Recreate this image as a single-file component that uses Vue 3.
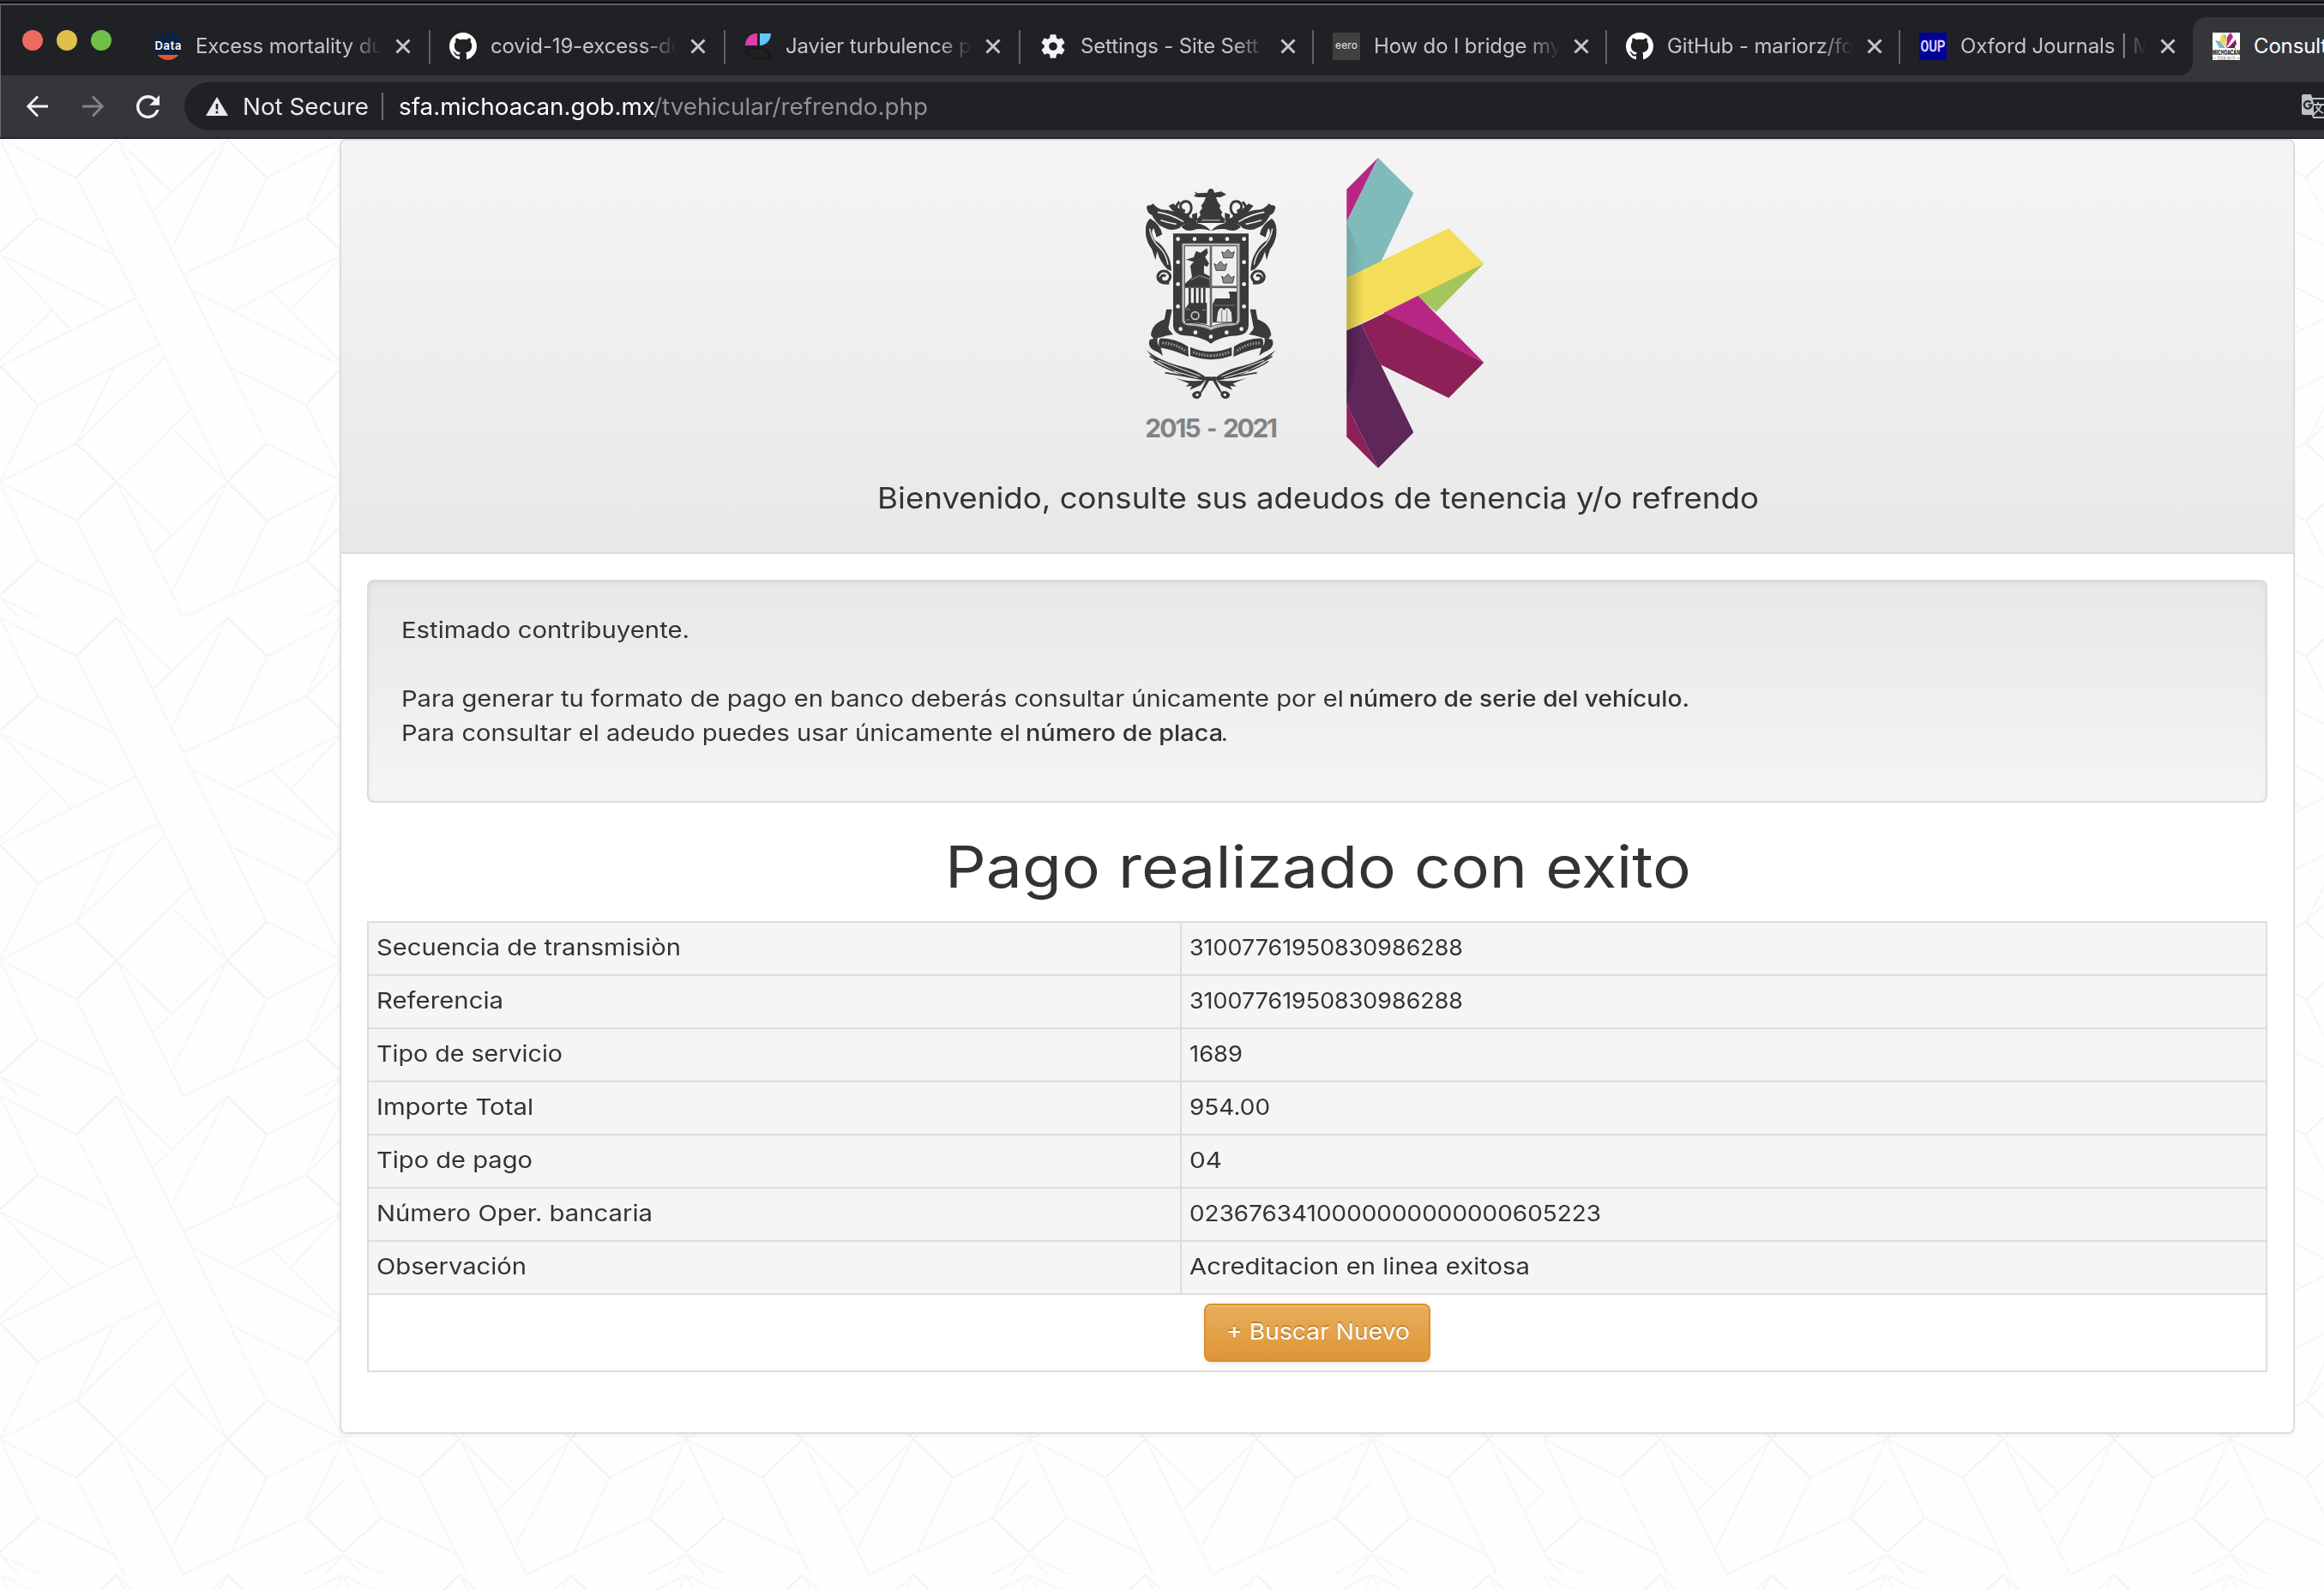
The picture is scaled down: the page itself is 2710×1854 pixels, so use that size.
<script setup>
const tabs = [
  { icon: 'data', title: 'Excess mortality du', width: 343 },
  { icon: 'github', title: 'covid-19-excess-de', width: 344 },
  { icon: 'leaf', title: 'Javier turbulence p', width: 344 },
  { icon: 'gear', title: 'Settings - Site Sett', width: 342 },
  { icon: 'eero', title: 'How do I bridge my', width: 342 },
  { icon: 'github', title: 'GitHub - mariorz/fo', width: 342 },
  { icon: 'oup', title: 'Oxford Journals | M', width: 342 },
]

const rows = [
  { label: 'Secuencia de transmisiòn', lw: 353, value: '31007761950830986288', vw: 317 },
  { label: 'Referencia', lw: 146, value: '31007761950830986288', vw: 317 },
  { label: 'Tipo de servicio', lw: 215, value: '1689', vw: 60 },
  { label: 'Importe Total', lw: 181, value: '954.00', vw: 92 },
  { label: 'Tipo de pago', lw: 180, value: '04', vw: 36 },
  { label: 'Número Oper. bancaria', lw: 320, value: '0236763410000000000000605223', vw: 478 },
  { label: 'Observación', lw: 173, value: 'Acreditacion en linea exitosa', vw: 395 },
]

const tiles = []
for (const x of [0, 1800]) for (const y of [0, 558, 1116, 1674]) tiles.push({ x, y })

// Widens a single-line text so that it fills the given width in pixels.
const vFit = {
  mounted(el, { value }) {
    el.style.display = 'inline-block'
    const natural = el.getBoundingClientRect().width
    el.style.width = value + 'px'
    el.style.textAlign = 'left'
    el.style.transformOrigin = '0 50%'
    el.style.transform = `scaleX(${(value + 2) / natural})`
  },
}
</script>

<template>
  <div class="screen">
    <header class="chrome">
      <div class="tabstrip">
        <div class="lights"><i class="red"></i><i class="yellow"></i><i class="green"></i></div>
        <div v-for="(t, i) in tabs" :key="i" class="tab" :class="{ first: i === 0, last: i === tabs.length - 1 }" :style="{ width: t.width + 'px' }">
          <svg v-if="t.icon === 'data'" class="fav" viewBox="0 0 32 32">
            <clipPath id="disc"><circle cx="16" cy="16" r="16" /></clipPath>
            <g clip-path="url(#disc)"><rect width="32" height="32" fill="#0b2140" /><rect y="26" width="32" height="6" fill="#f0512d" /></g>
            <text x="16" y="20" text-anchor="middle" font-size="13" font-weight="600" fill="#fff" textLength="31">Data</text>
          </svg>
          <svg v-else-if="t.icon === 'github'" class="fav" viewBox="0 0 16 16">
            <path fill="#fff" d="M8 0C3.58 0 0 3.58 0 8c0 3.54 2.29 6.53 5.47 7.59.4.07.55-.17.55-.38 0-.19-.01-.82-.01-1.49-2.01.37-2.53-.49-2.69-.94-.09-.23-.48-.94-.82-1.13-.28-.15-.68-.52-.01-.53.63-.01 1.08.58 1.23.82.72 1.21 1.87.87 2.33.66.07-.52.28-.87.51-1.07-1.78-.2-3.64-.89-3.64-3.95 0-.87.31-1.59.82-2.15-.08-.2-.36-1.02.08-2.12 0 0 .67-.21 2.2.82.64-.18 1.32-.27 2-.27s1.36.09 2 .27c1.53-1.04 2.2-.82 2.2-.82.44 1.1.16 1.92.08 2.12.51.56.82 1.27.82 2.15 0 3.07-1.87 3.75-3.65 3.95.29.25.54.73.54 1.48 0 1.07-.01 1.93-.01 2.2 0 .21.15.46.55.38A8.01 8.01 0 0 0 16 8c0-4.42-3.58-8-8-8z" />
          </svg>
          <svg v-else-if="t.icon === 'leaf'" class="fav" viewBox="0 0 32 32">
            <path d="M1 15A13 14 0 0 1 15 1V15Z" fill="#e13bab" />
            <path d="M18 1H31A13 14 0 0 1 18 15Z" fill="#5ec8f8" />
            <path d="M2 18H17Q29 19 30 30H16Q3 29 2 18Z" fill="none" stroke="#191919" stroke-width="2.5" />
          </svg>
          <svg v-else-if="t.icon === 'gear'" class="fav" viewBox="1.2 0 21.6 24">
            <path fill="#f1f3f4" transform="translate(12 12) scale(1.03) translate(-12 -12)" d="M19.43 12.98c.04-.32.07-.64.07-.98s-.03-.66-.07-.98l2.11-1.65c.19-.15.24-.42.12-.64l-2-3.46c-.12-.22-.39-.3-.61-.22l-2.49 1c-.52-.4-1.08-.73-1.69-.98l-.38-2.65A.488.488 0 0 0 14 2h-4c-.25 0-.46.18-.49.42l-.38 2.65c-.61.25-1.17.59-1.69.98l-2.49-1c-.23-.09-.49 0-.61.22l-2 3.46c-.13.22-.07.49.12.64l2.11 1.65c-.04.32-.07.65-.07.98s.03.66.07.98l-2.11 1.65c-.19.15-.24.42-.12.64l2 3.46c.12.22.39.3.61.22l2.49-1c.52.4 1.08.73 1.69.98l.38 2.65c.03.24.24.42.49.42h4c.25 0 .46-.18.49-.42l.38-2.65c.61-.25 1.17-.59 1.69-.98l2.49 1c.23.09.49 0 .61-.22l2-3.46c.12-.22.07-.49-.12-.64l-2.11-1.65zM12 15.500c-1.930 0-3.500-1.570-3.500-3.500s1.570-3.500 3.500-3.500 3.500 1.570 3.500 3.500-1.570 3.500-3.500 3.500z" />
          </svg>
          <svg v-else-if="t.icon === 'eero'" class="fav" viewBox="0 0 32 32">
            <rect width="32" height="32" fill="#404040" />
            <text x="3" y="19" font-size="12" fill="#e6e6e6" textLength="26">eero</text>
          </svg>
          <svg v-else class="fav" viewBox="0 0 32 32">
            <rect width="32" height="32" fill="#020299" />
            <text x="1.5" y="22" class="mono" font-size="20" fill="#dcdcff" stroke="#dcdcff" stroke-width=".6" textLength="29" lengthAdjust="spacingAndGlyphs">OUP</text>
          </svg>
          <span class="title">{{ t.title }}</span>
          <svg class="close" viewBox="0 0 18 18"><path d="M1.5 1.5L16.5 16.5M16.5 1.5L1.5 16.5" stroke="#c6c7ca" stroke-width="3" /></svg>
        </div>
        <div class="tab active">
          <svg class="fav" viewBox="0 0 32 32">
            <rect width="32" height="32" fill="#fff" />
            <path d="M16 18L9 9 10 2 14 4Z" fill="#f0d848" />
            <path d="M12 0l4 4v7z" fill="#a9c55b" />
            <path d="M16 18L17 5 21 0 24 5Z" fill="#b82683" />
            <path d="M18 18L27 8 28 14Z" fill="#8d2058" />
            <path d="M3 9L9 10 15 18H8Z" fill="#7fbaba" />
            <path d="M16 18L27 13 26 18Z" fill="#5f2759" />
            <text x="0" y="26" font-size="8" font-weight="800" fill="#222" textLength="32" lengthAdjust="spacingAndGlyphs">MICHOACÁN</text>
            <text x="6" y="31.500" font-size="6" fill="#777" textLength="20" lengthAdjust="spacingAndGlyphs">Está en ti</text>
            <path d="M0 30H4M28 30H32" stroke="#aaa" />
          </svg>
          <span class="title">Consulta</span>
        </div>
      </div>
      <div class="toolbar">
        <svg class="nav" viewBox="0 0 26 26"><path d="M25 13H3M13 1.5L1.8 13L13 24.5" fill="none" stroke="#f1f3f4" stroke-width="2.8" /></svg>
        <svg class="nav fwd" viewBox="0 0 26 26"><path d="M1 13H23M13 1.5L24.2 13L13 24.5" fill="none" stroke="#828386" stroke-width="2.8" /></svg>
        <svg class="reload" viewBox="4 4 16 16"><path fill="#f1f3f4" d="M17.65 6.35A7.958 7.958 0 0 0 12 4c-4.42 0-7.99 3.58-7.99 8s3.57 8 7.99 8c3.73 0 6.84-2.55 7.73-6h-2.08A5.99 5.99 0 0 1 12 18c-3.31 0-6-2.69-6-6s2.69-6 6-6c1.66 0 3.14.69 4.22 1.78L13 11h7V4l-2.35 2.35z" /></svg>
        <div class="omnibox">
          <svg class="warn" viewBox="0 0 26 22"><path fill="#e8eaed" d="M13 0L26 22H0Z" /><path d="M13 8V14.5M13 16.5V19.2" stroke="#202124" stroke-width="2.6" /></svg>
          <span class="secure"><span v-fit="145">Not Secure</span></span>
          <i class="bar"></i>
          <span class="url"><span v-fit="297" class="host">sfa.michoacan.gob.mx</span><span v-fit="318">/tvehicular/refrendo.php</span></span>
          <svg class="translate" viewBox="0 0 28 28">
            <path d="M12 5H30V27H14L12 22" fill="none" stroke="#bdc1c6" stroke-width="2" />
            <path d="M14 12H26M19 9V12M23 12Q21 18 15 22M17 14Q19 19 25 22" fill="none" stroke="#bdc1c6" stroke-width="1.8" />
            <path d="M2 0H11L14 10V20L16 24H2Q0 24 0 22V2Q0 0 2 0Z" fill="#bdc1c6" />
            <path d="M10.5 9.5A4.3 4.3 0 1 0 11.500 12.500H7.500" fill="none" stroke="#2b2c2f" stroke-width="2.4" />
          </svg>
        </div>
      </div>
    </header>

    <main class="page">
      <svg class="backdrop" width="2710" height="1692">
        <defs>
          <pattern id="motif" width="400" height="400" patternUnits="userSpaceOnUse">
            <g fill="none" stroke="#f6f6f6" stroke-width="2">
              <path d="M0 0L89 45L265 400M0 0L44 92L134 135M136 0L311 355L400 400M136 0L200 62M265 0L178 84M265 0L201 126M311 45L269 133M400 0L311 45M400 0L357 92L215 157M400 48L357 92M0 135L129 199M0 135L82 222M158 186L0 265M62 199L0 258M44 310L185 240M133 267L89 355M192 255L89 355M44 310L0 400L89 355M136 400L222 315M203 340L265 400M224 177L400 265M400 135L274 199M316 178L400 262M340 199L400 135M267 266L357 310L400 400" />
              <path stroke="#f1f1f1" d="M136 0L89 45M265 0L311 45M44 92L0 132M357 92L400 132M0 265L44 310M89 355L136 400M357 310L400 265M311 355L265 400" />
            </g>
          </pattern>
        </defs>
        <rect v-for="(t, i) in tiles" :key="i" width="1800" height="558" :transform="`translate(${t.x} ${t.y})`" fill="url(#motif)" />
      </svg>

      <section class="panel">
        <div class="heading">
          <svg class="logos" viewBox="108 60 1190 1110">
            <defs>
              <linearGradient id="fold" x1="0" x2="1"><stop offset="0" stop-color="#000" stop-opacity=".22" /><stop offset="1" stop-color="#000" stop-opacity="0" /></linearGradient>
              <g id="half" fill="#3a3a3a">
                <path d="M112 250Q108 236 126 238L134 232Q150 256 182 254Q226 262 284 290L290 304Q240 296 226 318Q196 330 176 318Q148 310 130 272Q116 270 112 250Z" />
                <path d="M150 262Q200 270 240 296M160 290Q190 300 215 304" fill="none" stroke="#efefef" stroke-width="5" />
                <path d="M188 240L205 232Q222 250 262 276L252 290Q210 270 188 240Z" />
                <path d="M246 258Q228 256 230 238Q238 220 258 226Q274 240 264 262Q254 280 226 270Q200 256 226 226" fill="none" stroke="#3a3a3a" stroke-width="9" />
                <path d="M270 270L288 264V292H272Z" />
                <path d="M124 284Q104 300 108 340Q112 370 130 392L142 430L148 400Q160 440 184 462L198 468Q196 430 184 410Q168 376 140 360Q122 330 136 318L146 350L166 340Q160 306 124 284Z" />
                <path d="M122 320Q126 360 160 390Q180 410 186 446" fill="none" stroke="#efefef" stroke-width="4" />
                <path d="M178 486Q164 478 160 494Q166 512 186 504Q204 484 182 470Q158 462 150 486Q150 514 190 510" fill="none" stroke="#3a3a3a" stroke-width="9" />
                <path d="M232 312Q250 296 282 300Q320 306 336 328Q310 318 286 322Q250 336 232 312Z" />
                <path d="M180 602H200L188 664L168 658Q176 630 180 602Z" />
                <path d="M178 636Q130 650 126 692L136 706Q164 700 182 694L204 690L190 674Z" />
                <path d="M122 708Q114 730 134 744Q150 750 168 764L160 736Q144 722 150 702Z" />
                <path d="M158 704Q206 702 256 732L258 768Q200 742 156 736Q150 716 158 704Z" />
                <path d="M166 720Q210 720 250 750" fill="none" stroke="#999" stroke-width="9" stroke-dasharray="5 5" />
                <path d="M264 734Q300 750 337 750V778Q298 776 264 764Z" />
                <path d="M274 752Q304 764 336 764" fill="none" stroke="#999" stroke-width="9" stroke-dasharray="5 5" />
                <path d="M110 744Q160 786 250 806Q290 816 322 842L314 852Q240 830 200 812Q140 786 110 744Z" />
                <path d="M122 766Q170 800 250 816M136 784Q190 820 300 846M176 824Q240 834 310 848" fill="none" stroke="#3a3a3a" stroke-width="5" />
                <path d="M150 780Q220 806 300 836M206 818Q250 830 290 842" fill="none" stroke="#efefef" stroke-width="3" />
                <path d="M200 838Q250 860 318 850L300 868L262 884L270 870L248 872L260 862Z" />
                <path d="M336 838H318V852L300 890Q280 884 270 900Q272 918 292 914Q306 906 302 896Q320 870 330 852H337Z" />
                <circle cx="288" cy="901" r="5" fill="#efefef" />
              </g>
            </defs>
            <use href="#half" />
            <use href="#half" transform="translate(673 0) scale(-1 1)" />
            <path d="M276 190L290 196L324 194Q326 180 336 180Q346 180 348 194L372 190L390 200L370 210H354L360 226L370 240L366 248L376 262L372 272L384 286V300H288V286L300 272L296 262L306 248L302 240L312 226L318 210H290L276 206L284 198Z" fill="#3a3a3a" />
            <path d="M304 290H368" stroke="#aaa" stroke-width="4" />
            <path d="M204 337H468V660Q466 690 430 694Q370 696 336 722Q302 696 244 694Q206 690 204 660Z" fill="#3a3a3a" />
            <path d="M238 374H434V640Q434 654 410 656Q360 658 336 672Q312 658 262 656Q238 654 238 640Z" fill="#efefef" stroke="#aaa" stroke-width="6" />
            <path d="M244 380H428V638Q428 648 408 650Q360 652 336 664Q312 652 264 650Q244 648 244 638Z" fill="none" stroke="#3a3a3a" stroke-width="3" />
            <path d="M336 380V662M244 524H428" stroke="#666" stroke-width="8" />
            <path d="M248 428L276 420L284 398L300 404L322 388L326 404L316 420L330 442L322 454L312 448V476L332 486V524H246V512L270 490L264 450L276 436Z" fill="#3a3a3a" />
            <path d="M266 500L296 484L330 496" fill="none" stroke="#999" stroke-width="3" />
            <path d="M262 528V590M280 528V584M297 528V590M313 528V584" stroke="#3a3a3a" stroke-width="8" />
            <path d="M246 600L260 580H322V654L300 650H246Z" fill="#3a3a3a" />
            <circle cx="281" cy="624" r="13" fill="#3a3a3a" stroke="#c8c8c8" stroke-width="5" />
            <path d="M250 606Q256 594 262 606M250 642Q256 632 262 642M306 604H318" fill="none" stroke="#999" stroke-width="3" />
            <path d="M342 648V584L352 564H402V552L398 540H426V650Z" fill="#3a3a3a" />
            <path d="M360 614Q370 586 382 606Q394 586 408 614L410 646H356Z" fill="#e8e8e8" />
            <path d="M374 604V644M392 604V644M348 588H420" stroke="#777" stroke-width="3" />
            <g fill="#8a8a8a" stroke="#444" stroke-width="3">
              <path d="M374 400L382 406 396 392 408 406 418 400 412 422H380Z" />
              <path d="M348 442L356 448 370 434 382 448 392 442 386 466H354Z" />
              <path d="M374 486L382 492 396 478 408 492 418 486 412 510H380Z" />
            </g>
            <g fill="#f2f2f2">
              <circle v-for="x in [221, 279, 336, 393, 452]" :key="x" :cx="x" cy="356" r="7" />
              <template v-for="y in [437, 514, 592]" :key="y"><circle cx="221" :cy="y" r="7" /><circle cx="452" :cy="y" r="7" /></template>
              <circle cx="230" cy="671" r="7" /><circle cx="282" cy="683" r="7" /><circle cx="336" cy="698" r="7" /><circle cx="391" cy="683" r="7" /><circle cx="443" cy="671" r="7" />
            </g>
            <g font-size="90" font-weight="700" fill="#808285">
              <text x="106" y="1049" textLength="196">2015</text>
              <text x="322" y="1049" textLength="36" lengthAdjust="spacingAndGlyphs">-</text>
              <text x="378" y="1049" textLength="192">2021</text>
            </g>

            <path d="M811 182L921 72L811 296Z" fill="#b82683" />
            <path d="M921 72L1045 196L930 438L811 492V296Z" fill="#80baba" />
            <path d="M1291 442L1123 611L1050 550Z" fill="#a5c55d" />
            <path d="M811 676L862 654L1045 1033L921 1158L811 934Z" fill="#5f2759" />
            <path d="M811 934L921 1158L811 1048Z" fill="#8d2058" />
            <path d="M862 654L946 614L1291 788L1168 912L930 796Z" fill="#8d2058" />
            <path d="M940 614L1060 554L1291 788Z" fill="#b82683" />
            <path d="M811 492L1168 318L1291 442L811 676Z" fill="#f4dd58" />
            <path d="M811 296L870 440V464L811 492Z" fill="url(#fold)" opacity=".5" />
            <path d="M811 492L870 464V648L811 676Z" fill="url(#fold)" />
            <path d="M811 676L862 654V740L811 934Z" fill="url(#fold)" />
          </svg>
          <p class="welcome"><span v-fit="1026">Bienvenido, consulte sus adeudos de tenencia y/o refrendo</span></p>
        </div>

        <div class="body">
          <div class="well">
            <div><span v-fit="334">Estimado contribuyente.</span></div>
            <div>&nbsp;</div>
            <div><span v-fit="1105">Para generar tu formato de pago en banco deberás consultar únicamente por el&nbsp;</span><b v-fit="395">número de serie del vehículo.</b></div>
            <div><span v-fit="728">Para consultar el adeudo puedes usar únicamente el&nbsp;</span><b v-fit="228">número de placa</b>.</div>
          </div>

          <h1><span v-fit="868">Pago realizado con exito</span></h1>

          <table>
            <colgroup><col class="c1" /><col /></colgroup>
            <tbody>
              <tr v-for="r in rows" :key="r.label">
                <td><span v-fit="r.lw">{{ r.label }}</span></td>
                <td><span v-fit="r.vw">{{ r.value }}</span></td>
              </tr>
              <tr class="action">
                <td colspan="2"><button type="button"><span v-fit="212">+ Buscar Nuevo</span></button></td>
              </tr>
            </tbody>
          </table>
        </div>
      </section>
    </main>
  </div>
</template>

<style>
body {
  margin: 0;
  overflow: hidden;
}
</style>

<style scoped>
.screen {
  width: 2710px;
  height: 1854px;
  overflow: hidden;
  display: flex;
  flex-direction: column;
  background: #fefefe;
  font-family: Inter, sans-serif;
  color: #333;
}
.screen * {
  box-sizing: border-box;
}
svg {
  display: block;
  flex: none;
}
svg text {
  font-family: Inter, sans-serif;
}
svg text.mono {
  font-family: "Liberation Mono", monospace;
}

/* browser chrome */
.chrome {
  flex: none;
  height: 162px;
  background: #202124;
  border-top: 2px solid #25272a;
  border-bottom: 2px solid #262427;
  box-shadow: inset 0 2px #000, inset 0 4px #5f6264, inset 1px 0 #66686a;
}
.tabstrip {
  height: 86px;
  padding-top: 18px;
  display: flex;
}
.lights {
  width: 158px;
  padding: 15px 0 0 26px;
  display: flex;
  gap: 16px;
  flex: none;
}
.lights i {
  width: 24px;
  height: 24px;
  border-radius: 50%;
}
.red { background: #ed6a5e; }
.yellow { background: #e0c04c; }
.green { background: #71c047; }
.tab {
  position: relative;
  flex: none;
  height: 68px;
  padding-left: 23px;
  display: flex;
  align-items: center;
}
.tab.first {
  padding-left: 22px;
}
.tab::after {
  content: "";
  position: absolute;
  right: -1px;
  top: 15px;
  width: 2px;
  height: 40px;
  background: #5f6063;
}
.tab.last::after,
.tab.active::after {
  display: none;
}
.fav {
  width: 32px;
  height: 32px;
}
.title {
  flex: none;
  width: 217px;
  margin-left: 16px;
  overflow: hidden;
  white-space: nowrap;
  font-size: 24px;
  letter-spacing: -0.15px;
  line-height: 34px;
  color: #c3c5c8;
  -webkit-mask-image: linear-gradient(90deg, #000 82%, transparent);
  mask-image: linear-gradient(90deg, #000 82%, transparent);
}
.close {
  width: 18px;
  height: 18px;
  margin-left: 16px;
}
.tab.active {
  width: 200px;
  border-radius: 16px 0 0 0;
  background: #35363a;
}
.tab.active::before {
  content: "";
  position: absolute;
  left: -16px;
  bottom: 0;
  width: 16px;
  height: 16px;
  background: radial-gradient(circle at 0 0, transparent 15.5px, #35363a 16.5px);
}
.tab.active .title {
  color: #fff;
  -webkit-mask-image: none;
  mask-image: none;
}
.toolbar {
  height: 72px;
  margin-left: 1px;
  padding-left: 30px;
  background: #35363a;
  display: flex;
  align-items: center;
}
.nav {
  width: 26px;
  height: 26px;
}
.nav.fwd { margin-left: 38px; }
.reload {
  width: 27px;
  height: 27px;
  margin-left: 38px;
}
.omnibox {
  width: 2700px;
  flex: none;
  height: 56px;
  margin-left: 29px;
  padding-left: 25px;
  border-radius: 28px 0 0 28px;
  background: #202124;
  display: flex;
  align-items: center;
  font-size: 27px;
  white-space: nowrap;
}
.warn {
  width: 26px;
  height: 22px;
}
.secure {
  flex: none;
  width: 150px;
  margin-left: 17px;
  color: #e8eaed;
}
.bar {
  flex: none;
  width: 2px;
  height: 32px;
  margin-left: 12px;
  background: #6c6d70;
}
.url {
  flex: none;
  width: 2237px;
  padding-left: 18px;
  color: #8f9194;
}
.host { color: #fff; }
.translate {
  width: 28px;
  height: 28px;
}

/* page */
.page {
  position: relative;
  flex: 1;
  padding-left: 396px;
}
.backdrop {
  position: absolute;
  left: 0;
  top: 0;
}
.panel {
  position: relative;
  width: 2280px;
  height: 1510px;
  border: 2px solid #ddd;
  border-radius: 8px;
  background: #fff;
  box-shadow: 0 2px 4px rgba(0, 0, 0, 0.05);
}
.heading {
  height: 482px;
  padding-top: 16px;
  display: flex;
  flex-direction: column;
  align-items: center;
  border-bottom: 2px solid #ddd;
  border-radius: 6px 6px 0 0;
  background: linear-gradient(#f5f5f5, #e8e8e8);
}
.logos {
  width: 396.67px;
  height: 370px;
  margin-right: 4px;
}
.welcome {
  margin: 1px 0 0;
  font-size: 34px;
  line-height: 60px;
  white-space: nowrap;
}
.body {
  padding: 30px 30px 0;
}
.well {
  height: 260px;
  padding: 37px 38px 0;
  border: 2px solid #dcdcdc;
  border-radius: 8px;
  background: linear-gradient(#e8e8e8, #f5f5f5);
  box-shadow: inset 0 2px 6px rgba(0, 0, 0, 0.05), 0 2px 0 rgba(255, 255, 255, 0.1);
  font-size: 26px;
  line-height: 40px;
  white-space: nowrap;
}
.well b {
  font-weight: 500;
}
h1 {
  margin: 39px 0 27px;
  font-size: 67px;
  font-weight: 400;
  line-height: 72px;
  text-align: center;
  white-space: nowrap;
}
table {
  width: 2216px;
  table-layout: fixed;
  border-collapse: separate;
  border-spacing: 0;
  border: 2px solid #ddd;
  border-width: 2px 0 0 2px;
  font-size: 26px;
  line-height: 40px;
}
.c1 { width: 948px; }
td {
  height: 62px;
  padding: 9px 9px 11px;
  border: 2px solid #ddd;
  border-width: 0 2px 2px 0;
  background: #f5f5f5;
  white-space: nowrap;
}
.action td {
  height: 90px;
  padding: 10px;
  background: #fff;
}
button {
  display: block;
  width: 264px;
  height: 68px;
  margin: 0 auto;
  padding: 1px 0 3px;
  border: 2px solid #d9902f;
  border-radius: 8px;
  background: linear-gradient(#e8ae5c, #df9537);
  box-shadow: inset 0 2px 0 rgba(255, 255, 255, 0.15), 0 2px 4px rgba(0, 0, 0, 0.1);
  font: 26px/60px Inter, sans-serif;
  color: #fff;
  text-shadow: 0 -2px 0 rgba(0, 0, 0, 0.2);
  white-space: nowrap;
}
</style>
